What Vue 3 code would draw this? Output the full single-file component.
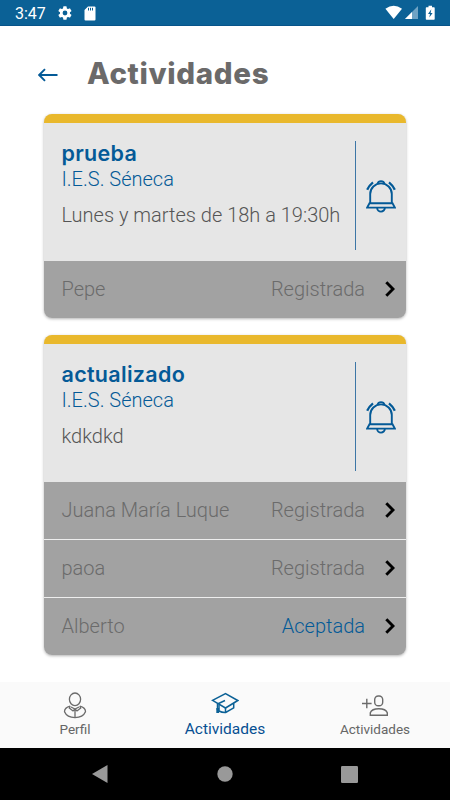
<template>
  <div class="screen">
    <div class="status-bar">
      <span class="clock">3:47</span>
      <svg class="gear" viewBox="0 0 24 24" width="16" height="16">
        <path fill="#fff" fill-rule="evenodd" d="M19.4 13a7.8 7.8 0 0 0 0-2l2.1-1.600a.6.6 0 0 0 .1-.7l-2-3.400a.6.6 0 0 0-.7-.2l-2.400 1a7.500 7.500 0 0 0-1.700-1l-.4-2.600a.5.5 0 0 0-.5-.5h-4a.5.5 0 0 0-.5.5L9 5.100a7.500 7.500 0 0 0-1.700 1l-2.400-1a.5.5 0 0 0-.7.2l-2 3.400a.5.5 0 0 0 .2.700L4.500 11a7.800 7.800 0 0 0 0 2l-2.100 1.600a.6.6 0 0 0-.2.700l2 3.400c.2.300.4.300.7.200l2.400-1a7.500 7.500 0 0 0 1.700 1l.4 2.600c0 .3.300.5.500.5h4c.3 0 .5-.2.500-.5l.4-2.600a7.500 7.500 0 0 0 1.700-1l2.400 1c.3.100.5 0 .7-.2l2-3.400a.5.5 0 0 0-.1-.7zM12 15.600a3.600 3.600 0 1 1 0-7.200 3.600 3.600 0 0 1 0 7.200z" />
      </svg>
      <svg class="sd" viewBox="0 0 12 15" width="12" height="15">
        <path fill="#fff" d="M4 .5h6.500q1 0 1 1v12q0 1-1 1h-9q-1 0-1-1V4z" />
        <path stroke="#0b6196" stroke-width="1" d="M4.500 1.800v2.700M6.500 1.800v2.700M8.500 1.800v2.700" />
      </svg>
      <svg class="signals" viewBox="0 0 50 16" width="50" height="16">
        <path fill="#fff" d="M.4 3.800Q8.700-2.200 17 3.800L8.700 14z" />
        <path fill="#6fa3c4" d="M33 1v13H20z" />
        <path fill="#fff" d="M27 7v7h-7z" />
        <path fill="#fff" d="M43.500.8h3.500v1.500h2q.7 0 .7.700v11q0 .8-.7.800h-7.500q-.7 0-.7-.8V3q0-.7.7-.7h2z" />
        <path fill="#0b6196" d="M46.300 4.300 43 9h2l-.7 3.500L47.600 8h-2z" />
      </svg>
    </div>

    <header class="page-header">
      <svg viewBox="0 0 20 14" width="20" height="14">
        <path d="M19.500 7H1.700M7 1.200 1.200 7 7 12.800" fill="none" stroke="#045a97" stroke-width="1.900" />
      </svg>
      <h1>Actividades</h1>
    </header>

    <main class="list">
      <section v-for="activity in activities" :key="activity.title" class="card">
        <div class="card-body">
          <div class="info">
            <h2>{{ activity.title }}</h2>
            <p class="school">I.E.S. Séneca</p>
            <p class="schedule">{{ activity.schedule }}</p>
          </div>
          <div class="bell">
            <svg viewBox="0 0 30 34" width="30" height="34" fill="none" stroke="#045a97" stroke-width="1.900">
              <path d="M4.200 24V15a10.800 10.600 0 0 1 21.600 0V24" />
              <path d="M11.600 4.600a3.500 3.300 0 0 1 6.800 0" />
              <path d="M3.500 24.200h23l2.400 4.400H1.100z" />
              <path d="M11.200 29a3.800 3.600 0 0 0 7.600 0" />
              <path d="M1.200 10.800Q3 6.500 7 3.300M28.800 10.800Q27 6.500 23 3.300" stroke-width="2.300" />
            </svg>
          </div>
        </div>
        <ul class="students">
          <li v-for="student in activity.students" :key="student.name">
            <span>{{ student.name }}</span>
            <span class="state" :class="{ accepted: student.state === 'Aceptada' }">{{ student.state }}</span>
            <svg viewBox="0 0 10 16" width="10" height="16">
              <path d="M1.300 1.300 8 8 1.300 14.700" fill="none" stroke="#000" stroke-width="2.900" />
            </svg>
          </li>
        </ul>
      </section>
    </main>

    <nav class="tabs">
      <div class="tab">
        <svg viewBox="0 0 24 28" width="24" height="28" fill="none" stroke="#6b6b6b" stroke-width="1.300">
          <ellipse cx="12" cy="8.300" rx="5.600" ry="6.300" />
          <path d="M7.200 15.200Q1.500 16.700 1.500 20.800 4 26.600 12 26.600T22.500 20.800Q22.500 16.700 16.800 15.200" />
          <path d="M7.200 15.200 6.300 17l3.700 3 2-2 2 2 3.700-3-.9-1.800M8 16l4 2 4-2M12 18v8" />
        </svg>
        <span>Perfil</span>
      </div>
      <div class="tab active">
        <svg viewBox="0 0 28 28" width="28" height="28" fill="none" stroke="#0b6196" stroke-width="1.500">
          <path d="M1.500 9.300 14.500 2.500l12.300 7L14.500 17z" />
          <path d="M8 14v6q3 1.700 6.700 1.500l8-4.600v-4.700M14.500 17v4.500" />
          <path d="M14 9.500 6.500 13v6" />
          <path d="M6.700 17v5" stroke-width="2.800" />
        </svg>
        <span>Actividades</span>
      </div>
      <div class="tab last">
        <svg viewBox="0 0 28 28" width="28" height="28" fill="none" stroke="#6b6b6b" stroke-width="1.400">
          <rect x="13.700" y="5" width="8" height="9.800" rx="3.600" />
          <path d="M9.300 24.300v-2.500q1.500-4 8.500-4t8.500 4v2.500zM1 12.500h9.600M5.800 7.700v9.600" />
        </svg>
        <span>Actividades</span>
      </div>
    </nav>

    <div class="system-bar">
      <svg viewBox="0 0 16 18" width="16" height="18">
        <path d="M0 9 15.500 0v18z" />
      </svg>
      <svg viewBox="0 0 16 16" width="16" height="16">
        <circle cx="8" cy="8" r="7.700" />
      </svg>
      <svg viewBox="0 0 17 17" width="17" height="17">
        <rect width="17" height="17" rx="1.200" />
      </svg>
    </div>
  </div>
</template>

<script setup>
const activities = [
  {
    title: 'prueba',
    schedule: 'Lunes y martes de 18h a 19:30h',
    students: [{ name: 'Pepe', state: 'Registrada' }],
  },
  {
    title: 'actualizado',
    schedule: 'kdkdkd',
    students: [
      { name: 'Juana María Luque', state: 'Registrada' },
      { name: 'paoa', state: 'Registrada' },
      { name: 'Alberto', state: 'Aceptada' },
    ],
  },
]
</script>

<style>
body {
  margin: 0;
  background: #fff;
}
</style>

<style scoped>
.screen {
  display: flex;
  flex-direction: column;
  width: 450px;
  height: 800px;
  overflow: hidden;
  background: #fff;
  font-family: Roboto, "Liberation Sans", sans-serif;
}

svg {
  display: block;
  flex: none;
}

h1,
h2,
p,
ul {
  margin: 0;
  padding: 0;
}

.status-bar {
  display: flex;
  align-items: center;
  flex: none;
  box-sizing: border-box;
  height: 26px;
  padding: 1px 15px 0;
  background: #0b6196;
  border-bottom: 1px solid #07548a;
}

.clock {
  width: 42px;
  color: #fff;
  font-size: 16px;
  font-weight: 400;
}

.sd {
  margin-left: 11px;
}

.signals {
  margin-left: auto;
}

.page-header {
  display: flex;
  align-items: center;
  flex: none;
  height: 88px;
  padding-left: 38px;
}

.page-header svg {
  margin-top: 9px;
}

h1 {
  margin: 6px 0 0 29px;
  color: #6b6a6a;
  font-family: Inter, Roboto, sans-serif;
  font-size: 29.500px;
  font-weight: 800;
  line-height: 36px;
  letter-spacing: 0.650px;
}

.list {
  display: flex;
  flex: 1;
  flex-direction: column;
  gap: 17px;
  padding: 0 44px 0 43.500px;
}

.card {
  overflow: hidden;
  border-radius: 8px;
  background: #e6e6e6;
  box-shadow: 0 1px 3px rgba(0, 0, 0, 0.3);
}

.card-body {
  display: flex;
  box-sizing: border-box;
  height: 147px;
  padding: 18px 10px 11px 18px;
  border-top: 9px solid #e9b82c;
}

.info {
  flex: 1;
  font-size: 20px;
  white-space: nowrap;
}

h2 {
  color: #045a97;
  font-family: Inter, Roboto, sans-serif;
  font-size: 21.500px;
  font-weight: 600;
  line-height: 25px;
  letter-spacing: 0.300px;
}

.school {
  margin-top: 1px;
  color: #045a97;
  font-weight: 300;
  line-height: 24px;
}

.schedule {
  margin-top: 12px;
  color: #555;
  font-weight: 300;
  line-height: 25px;
}

.bell {
  display: flex;
  align-items: center;
  justify-content: flex-end;
  width: 40px;
  border-left: 1px solid #3d76a6;
}

.students {
  list-style: none;
}

.students li {
  display: flex;
  align-items: center;
  box-sizing: border-box;
  height: 57px;
  padding: 0 11px 2px 18px;
  background: #a2a2a2;
  color: #6b6b6b;
  font-size: 20px;
  font-weight: 300;
}

.students li + li {
  height: 58px;
  border-top: 1px solid #eee;
}

.state {
  margin-left: auto;
}

.accepted {
  color: #045a97;
}

.students svg {
  margin-left: 20px;
}

.tabs {
  display: flex;
  flex: none;
  box-sizing: border-box;
  height: 66px;
  background: #fafafa;
}

.tab {
  display: flex;
  flex: 1;
  flex-direction: column;
  align-items: center;
  padding-top: 9px;
  color: #666;
  font-size: 13.500px;
  line-height: 20px;
}

.active {
  color: #064f92;
  font-size: 15.500px;
}

.system-bar {
  display: flex;
  align-items: center;
  justify-content: space-between;
  flex: none;
  box-sizing: border-box;
  height: 52px;
  padding: 0 92px;
  background: #000;
  fill: #999;
}
</style>
